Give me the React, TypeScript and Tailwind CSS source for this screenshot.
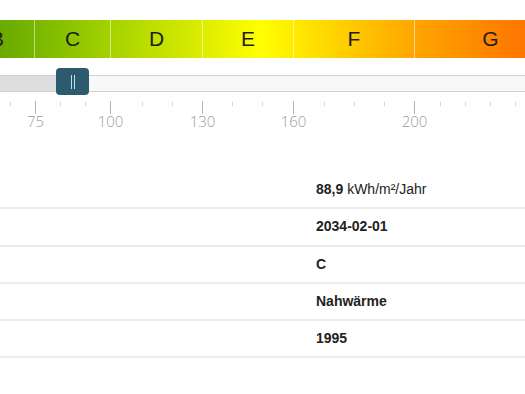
const segments = [
  { label: "B", w: "w-[74px]" },
  { label: "C", w: "w-[76px]" },
  { label: "D", w: "w-[92px]" },
  { label: "E", w: "w-[91px]" },
  { label: "F", w: "w-[121px]" },
  { label: "G", w: "w-[152px]" },
]

const majors = [
  { x: 35, v: "75" },
  { x: 110, v: "100" },
  { x: 202, v: "130" },
  { x: 293, v: "160" },
  { x: 414, v: "200" },
]

const minors = [10, 60, 85, 142, 172, 232, 262, 324, 354, 384, 440, 465, 490, 515]

const rows = [
  { value: "88,9", unit: " kWh/m²/Jahr" },
  { value: "2034-02-01" },
  { value: "C" },
  { value: "Nahwärme" },
  { value: "1995" },
]

export default function App() {
  return (
    <div className="h-[394px] w-[525px] overflow-hidden bg-white font-['Liberation_Sans',Arial,sans-serif]">
      {/* energy class bar */}
      <div className="pt-[20px] overflow-hidden">
        <div className="-ml-[40px] flex h-[38px] w-[606px] bg-[linear-gradient(90deg,#5a9c00_0px,#78b600_74px,#a4d200_150px,#dced00_242px,#ffff00_300px,#ffe400_345px,#ffa600_454px,#ff6400_606px)]">
          {segments.map((s, i) => (
            <div
              key={s.label}
              className={`${s.w} flex items-center justify-center text-[21px] text-[#1e1e1e] ${i > 0 ? "border-l border-white/50" : ""}`}
            >
              {s.label}
            </div>
          ))}
        </div>
      </div>

      {/* slider */}
      <div className="relative mt-[10px] h-[27px] pt-[7px]">
        <div className="flex h-[17px] border-y border-[#d0d0d0] bg-[#f8f8f8]">
          <div className="w-[60px] bg-[#dedede]" />
        </div>
        <div className="absolute left-[56px] top-0 flex h-[27px] w-[33px] items-center justify-center gap-[2px] rounded-[4px] bg-[#2c5a6f]">
          <span className="h-[14px] w-px bg-[#c9dbe3]" />
          <span className="h-[14px] w-px bg-[#c9dbe3]" />
        </div>
      </div>

      {/* scale */}
      <svg width="525" height="36" className="block">
        {minors.map((x) => (
          <line key={x} x1={x + 0.5} x2={x + 0.5} y1={7} y2={11} stroke="#d6d6d6" strokeWidth={1} />
        ))}
        {majors.map((m) => (
          <g key={m.v}>
            <line x1={m.x + 0.5} x2={m.x + 0.5} y1={6} y2={19} stroke="#b4b4b4" strokeWidth={1} />
            <text
              x={m.x + 0.5}
              y={32}
              textAnchor="middle"
              fontSize={15}
              fill="#9c9c9c"
              fontFamily="'Open Sans', sans-serif"
              fontWeight={300}
            >
              {m.v}
            </text>
          </g>
        ))}
      </svg>

      {/* details table */}
      <div className="mt-[41px]">
        {rows.map((r) => (
          <div key={r.value} className="grid h-[37.3px] grid-cols-[316px_1fr] items-center border-b-2 border-[#ececec] text-[14px] text-[#222]">
            <div />
            <div>
              <span className="font-bold">{r.value}</span>
              {r.unit && <span>{r.unit}</span>}
            </div>
          </div>
        ))}
      </div>
    </div>
  )
}
